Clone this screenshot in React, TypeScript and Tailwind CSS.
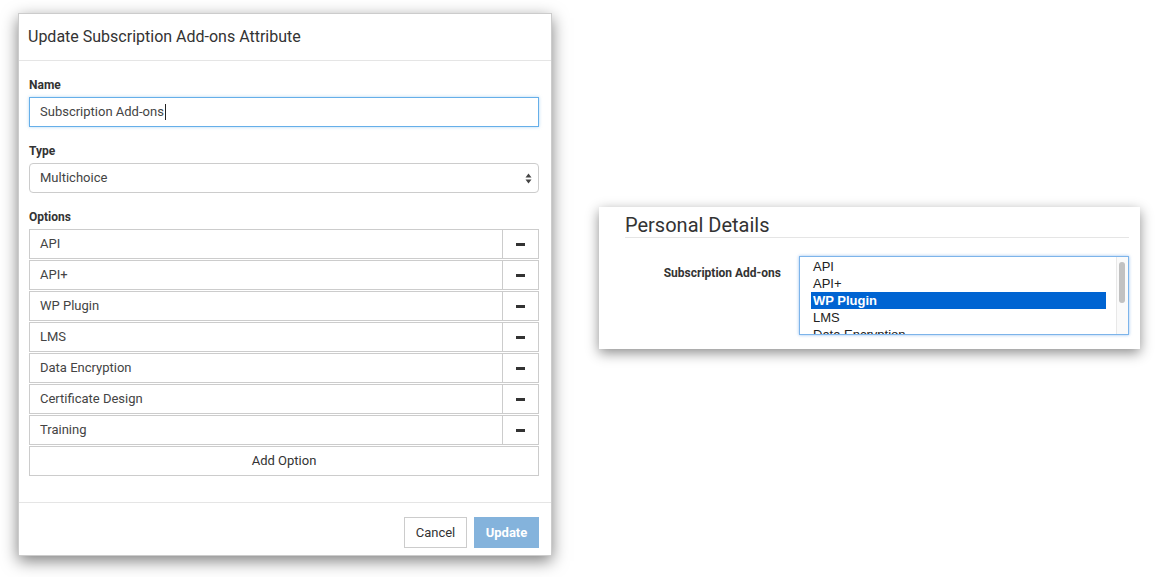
import React from "react";

const OPTIONS = ["API", "API+", "WP Plugin", "LMS", "Data Encryption", "Certificate Design", "Training"];
const LIST_ITEMS = ["API", "API+", "WP Plugin", "LMS", "Data Encryption"];

function OptionRow({ label }: { label: string }) {
  return (
    <div className="flex h-[30px] border border-[#cccccc] bg-white">
      <div className="flex flex-1 items-center pl-[10px] text-[13px] text-[#444]">{label}</div>
      <div className="flex w-[36px] items-center justify-center border-l border-[#cccccc]">
        <div className="h-[3px] w-[9px] bg-[#333]" />
      </div>
    </div>
  );
}

function EditModal() {
  return (
    <div className="w-[534px] border border-black/20 bg-white shadow-[0_5px_15px_rgba(0,0,0,0.5)]">
      <div className="flex h-[47px] items-center border-b border-[#e5e5e5] pl-[9px] text-[16px] text-[#333]">
        Update Subscription Add-ons Attribute
      </div>
      <div className="pl-[10px] pr-[12px] pt-[17px] pb-[26px]">
        <div className="mb-[5px] h-[14px] text-[12px] font-bold leading-[14px] text-[#333]">Name</div>
        <div className="flex h-[30px] items-center border border-[#66afe9] pl-[10px] text-[13px] text-[#444] shadow-[0_0_3px_rgba(102,175,233,0.5)]">
          Subscription Add-ons
          <span className="ml-px h-[16px] w-px bg-[#222]" />
        </div>
        <div className="mb-[5px] mt-[17px] h-[14px] text-[12px] font-bold leading-[14px] text-[#333]">Type</div>
        <div className="flex h-[30px] items-center justify-between rounded-[4px] border border-[#cccccc] pl-[10px] pr-[6px] text-[13px] text-[#444]">
          <span>Multichoice</span>
          <svg width="7" height="11" viewBox="0 0 7 11">
            <path d="M3.5 0.5 L6.5 4.5 L0.5 4.5 Z" fill="#444" />
            <path d="M3.5 10.5 L6.5 6.5 L0.5 6.5 Z" fill="#444" />
          </svg>
        </div>
        <div className="mb-[5px] mt-[17px] h-[14px] text-[12px] font-bold leading-[14px] text-[#333]">Options</div>
        <div className="flex flex-col gap-px">
          {OPTIONS.map((o) => (
            <OptionRow key={o} label={o} />
          ))}
          <div className="flex h-[30px] items-center justify-center border border-[#cccccc] text-[13px] text-[#333]">
            Add Option
          </div>
        </div>
      </div>
      <div className="flex justify-end gap-[7px] border-t border-[#e5e5e5] pr-[12px] pt-[14px] pb-[7px]">
        <button className="h-[31px] w-[63px] border border-[#cccccc] bg-white text-[13px] text-[#333]">Cancel</button>
        <button className="h-[31px] w-[65px] bg-[#84b3dc] text-[13px] font-bold text-white">Update</button>
      </div>
    </div>
  );
}

function PersonalDetails() {
  return (
    <div className="mt-[194px] h-[142px] w-[541px] bg-white pl-[26px] pr-[11px] pt-[6px] shadow-[0_4px_12px_rgba(0,0,0,0.45)]">
      <div className="h-[25px] border-b border-[#e5e5e5] text-[20px] leading-[24px] text-[#333]">Personal Details</div>
      <div className="mt-[18px] flex gap-[18px]">
        <div className="w-[156px] pt-[8px] text-right text-[12px] font-bold text-[#333]">Subscription Add-ons</div>
        <div className="flex h-[79px] w-[330px] overflow-hidden border border-[#7db4ea] bg-white shadow-[0_0_3px_rgba(80,150,230,0.6)]">
          <div className="flex-1 overflow-hidden pl-[11px] pr-[10px] pt-px font-['Liberation_Sans',Arial,sans-serif] text-[13px] leading-[17px] text-[#222]">
            {LIST_ITEMS.map((it) => (
              <div
                key={it}
                className={
                  it === "WP Plugin"
                    ? "h-[17px] bg-[#0064d2] pl-[2px] font-bold text-white"
                    : "h-[17px] pl-[2px]"
                }
              >
                {it}
              </div>
            ))}
          </div>
          <div className="w-[12px] border-l border-[#e8e8e8] bg-[#fafafa] pl-[2px] pt-[5px]">
            <div className="h-[41px] w-[6px] rounded-full bg-[#c1c1c1]" />
          </div>
        </div>
      </div>
    </div>
  );
}

export default function App() {
  return (
    <div className="flex h-[577px] w-[1159px] gap-[47px] bg-white pl-[18px] pt-[13px] font-['Roboto',sans-serif]">
      <div>
        <EditModal />
      </div>
      <div>
        <PersonalDetails />
      </div>
    </div>
  );
}
